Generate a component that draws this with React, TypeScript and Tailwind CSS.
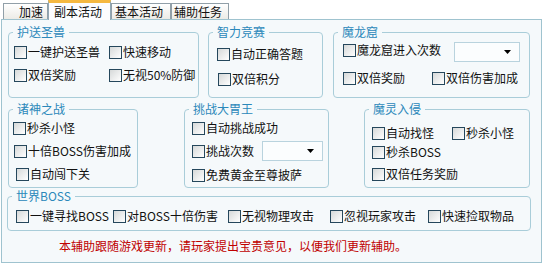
import type { ReactNode } from "react";

const Check = ({ label, className = "" }: { label: string; className?: string }) => (
  <div className={`flex items-center h-[16px] whitespace-nowrap ${className}`}>
    <span className="w-[13px] h-[13px] shrink-0 border border-[#25475c] bg-linear-to-br from-[#d6d9d9] to-white" />
    <span className="ml-[1px]">{label}</span>
  </div>
);

const Combo = ({ className = "" }: { className?: string }) => (
  <div className={`flex items-center justify-end bg-[#fbfdfe] border border-[#b9d3de] ${className}`}>
    <svg width="7" height="4" viewBox="0 0 7 4" className="mr-[8px]">
      <path d="M0 0h7L3.5 4z" fill="#000" />
    </svg>
  </div>
);

const Group = ({ title, className, children }: { title: string; className: string; children: ReactNode }) => (
  <fieldset className={`border border-[#a9cdd9] rounded-[4px] shrink-0 ${className}`}>
    <legend className="ml-[4px] px-[4px] leading-[16px] text-[#2b88ba]">{title}</legend>
    {children}
  </fieldset>
);

const tabs = [
  { name: "加速", cls: "w-[45px] pl-[15px]" },
  { name: "副本活动", cls: "w-[63px] pl-[5px]", active: true },
  { name: "基本活动", cls: "w-[60px] pl-[3px]" },
  { name: "辅助任务", cls: "w-[58px] pl-[2px]" },
];

export default function App() {
  return (
    <div className="w-[543px] h-[264px] bg-white text-[12px] text-[#111] font-['Noto_Sans_CJK_SC',sans-serif] overflow-hidden">
      {/* tab strip */}
      <div className="flex items-end h-[19px] pl-[3px]">
        {tabs.map((t) =>
          t.active ? (
            <div
              key={t.name}
              className={`relative z-10 -mb-[1px] h-[20px] border-x border-[#91a7b4] border-t-[3px] border-t-[#f5b840] bg-[#fcfcfe] leading-[17px] ${t.cls}`}
            >
              {t.name}
            </div>
          ) : (
            <div
              key={t.name}
              className={`h-[16px] border-t border-x border-[#919fa8] bg-linear-to-b from-white to-[#ecebe6] leading-[15px] ${t.cls}`}
            >
              {t.name}
            </div>
          )
        )}
      </div>

      {/* tab page */}
      <div className="ml-[1px] w-[541px] h-[244px] border border-[#9fc3cf] bg-[#f5f9fb]">
        {/* row 1 */}
        <div className="flex mt-[4px] ml-[6px]">
          <Group title="护送圣兽" className="w-[191px] h-[74px]">
            <div className="grid grid-cols-[95px_auto] gap-y-[7px] pt-[4px] pl-[5px]">
              <Check label="一键护送圣兽" />
              <Check label="快速移动" />
              <Check label="双倍奖励" />
              <Check label="无视50%防御" />
            </div>
          </Group>

          <Group title="智力竞赛" className="ml-[9px] w-[115px] h-[74px]">
            <div className="flex flex-col gap-y-[9px] pt-[6px] pl-[8px]">
              <Check label="自动正确答题" />
              <Check label="双倍积分" className="ml-[1px]" />
            </div>
          </Group>

          <Group title="魔龙窟" className="ml-[10px] w-[197px] h-[74px]">
            <div className="pt-[2px] pl-[9px]">
              <div className="flex items-start">
                <Check label="魔龙窟进入次数" />
                <Combo className="ml-[13px] w-[66px] h-[20px]" />
              </div>
              <div className="grid grid-cols-[89px_auto] mt-[8px]">
                <Check label="双倍奖励" />
                <Check label="双倍伤害加成" />
              </div>
            </div>
          </Group>
        </div>

        {/* row 2 */}
        <div className="flex mt-[3px] ml-[6px]">
          <Group title="诸神之战" className="w-[130px] h-[87px]">
            <div className="flex flex-col gap-y-[7px] pt-[3px] pl-[4px]">
              <Check label="秒杀小怪" />
              <Check label="十倍BOSS伤害加成" className="ml-[1px]" />
              <Check label="自动闯下关" className="ml-[3px]" />
            </div>
          </Group>

          <Group title="挑战大胃王" className="ml-[46px] w-[145px] h-[87px]">
            <div className="flex flex-col pt-[3px] pl-[7px]">
              <Check label="自动挑战成功" />
              <div className="flex items-center h-[20px] mt-[5px]">
                <Check label="挑战次数" />
                <Combo className="ml-[8px] w-[61px] h-[20px]" />
              </div>
              <Check label="免费黄金至尊披萨" className="mt-[6px]" />
            </div>
          </Group>

          <Group title="魔灵入侵" className="ml-[35px] w-[166px] h-[87px]">
            <div className="pt-[8px] pl-[7px]">
              <div className="grid grid-cols-[80px_auto]">
                <Check label="自动找怪" />
                <Check label="秒杀小怪" />
              </div>
              <Check label="秒杀BOSS" className="mt-[3px]" />
              <Check label="双倍任务奖励" className="mt-[6px]" />
            </div>
          </Group>
        </div>

        {/* world boss */}
        <Group title="世界BOSS" className="ml-[5px] w-[524px] h-[43px]">
          <div className="grid grid-cols-[97px_115px_102px_98px_auto] pt-[4px] pl-[8px]">
            <Check label="一键寻找BOSS" />
            <Check label="对BOSS十倍伤害" />
            <Check label="无视物理攻击" />
            <Check label="忽视玩家攻击" />
            <Check label="快速捡取物品" />
          </div>
        </Group>

        <p className="mt-[7px] ml-[57px] leading-[16px] text-[#c00000]">
          本辅助跟随游戏更新，请玩家提出宝贵意见，以便我们更新辅助。
        </p>
      </div>
    </div>
  );
}
